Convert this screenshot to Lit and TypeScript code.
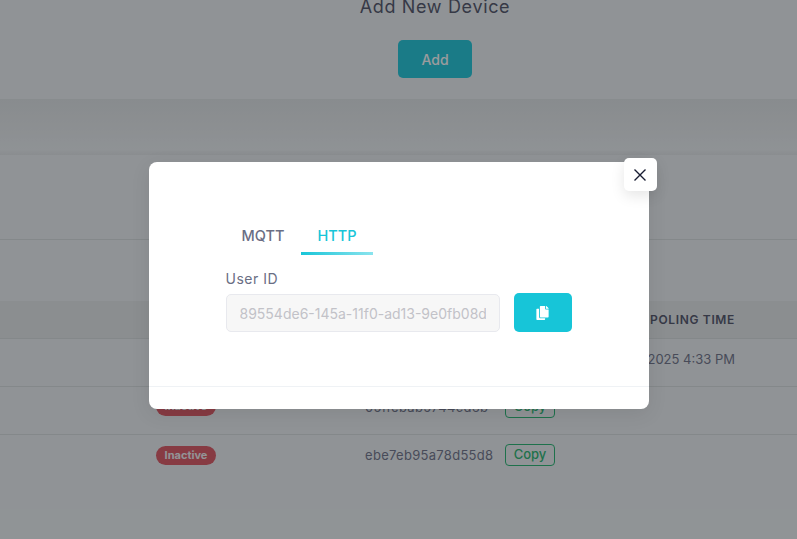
import { LitElement, html, css } from "lit";
import { customElement, state } from "lit/decorators.js";

const rows = [
  { id: "a41c7e90d2b6f358", date: "Jun 2, 2025 4:33 PM" },
  { id: "05ffebab5744cd6b", date: "" },
  { id: "ebe7eb95a78d55d8", date: "" },
];

@customElement("app-root")
export class AppRoot extends LitElement {
  static styles = css`
    :host {
      display: block;
      font-family: "Inter", "Liberation Sans", sans-serif;
    }
    .page {
      position: relative;
      height: 539px;
      overflow: hidden;
      background: #edf1f2;
      color: #3f4254;
    }
    .addSection {
      height: 99px;
      box-sizing: border-box;
      padding-left: 73px;
      display: flex;
      flex-direction: column;
      align-items: center;
    }
    .addSection h2 {
      margin: 0;
      height: 40px;
      font-size: 18px;
      line-height: 14px;
      font-weight: 400;
      letter-spacing: 0.65px;
      color: #4a4d62;
    }
    .addBtn {
      width: 74px;
      height: 38px;
      border: none;
      border-radius: 5px;
      background: #17c5d8;
      color: #fff;
      font: inherit;
      font-size: 14px;
      font-weight: 500;
    }
    .band {
      height: 56px;
      background: linear-gradient(#dfe3e4, #ebeff0 90%, #e2e6e7);
    }
    .filters {
      height: 84px;
      border-bottom: 1px solid #d8dcdd;
    }
    .spacer {
      height: 61px;
    }
    .row {
      display: grid;
      grid-template-columns: 156px 209px 140px 50px 180px;
      align-items: center;
      height: 48px;
      padding-bottom: 8px;
      box-sizing: border-box;
      border-bottom: 1px solid #d8dcdd;
      font-size: 13px;
      color: #6a6e84;
    }
    .row:last-child {
      border-bottom: none;
    }
    .head {
      height: 38px;
      padding-bottom: 0;
      background: #e3e7e8;
      font-size: 12px;
      font-weight: 600;
      letter-spacing: 0.65px;
      color: #4a4d62;
    }
    .cell-date {
      text-align: right;
    }
    .badge {
      display: inline-block;
      width: 60px;
      height: 19px;
      line-height: 18px;
      text-align: center;
      border-radius: 10px;
      background: #dc505c;
      color: #f2f2f2;
      font-size: 11px;
      font-weight: 700;
    }
    .id {
      letter-spacing: 0.3px;
    }
    .copy {
      width: 50px;
      height: 22px;
      padding: 0 0 2px;
      border: 1px solid #1eb36b;
      border-radius: 4px;
      background: transparent;
      color: #1eb36b;
      font: inherit;
      font-size: 13px;
      font-weight: 500;
    }
    .overlay {
      position: absolute;
      inset: 0;
      display: flex;
      justify-content: center;
      align-items: flex-start;
      padding-top: 162px;
      background: rgba(30, 34, 38, 0.45);
    }
    .modal {
      position: relative;
      width: 500px;
      height: 247px;
      box-sizing: border-box;
      display: flex;
      flex-direction: column;
      background: #fff;
      border-radius: 8px;
      box-shadow: 0 5px 20px rgba(0, 0, 0, 0.08);
    }
    .close {
      position: absolute;
      top: -4px;
      right: -8px;
      width: 33px;
      height: 33px;
      display: flex;
      align-items: center;
      justify-content: center;
      padding: 0;
      border: none;
      border-radius: 5px;
      background: #fff;
      box-shadow: 0 5px 14px rgba(0, 0, 0, 0.1);
    }
    .body {
      flex: 1;
      padding: 58px 77px 0;
      border-bottom: 1px solid #eff2f5;
    }
    .tabs {
      display: flex;
      height: 35px;
    }
    .tab {
      box-sizing: border-box;
      height: 35px;
      padding: 6px 16px 0 17px;
      font-size: 14.5px;
      font-weight: 500;
      line-height: 20px;
      color: #6a6e84;
    }
    .tab.mqtt {
      width: 75px;
      padding-left: 16px;
    }
    .tab.http {
      width: 72px;
      color: #17c5d8;
      border-bottom: 3px solid;
      border-image: linear-gradient(90deg, #17c5d8, #8ce4ee) 1;
    }
    label {
      display: block;
      margin: 15px 0 5px;
      font-size: 14px;
      line-height: 18px;
      letter-spacing: 0.5px;
      color: #6a6e84;
    }
    .field {
      display: flex;
      align-items: flex-start;
      gap: 14px;
    }
    input {
      width: 274px;
      height: 38px;
      margin-top: 1px;
      box-sizing: border-box;
      padding: 0 13px;
      border: 1px solid #e8e9ee;
      border-radius: 5px;
      background: #f7f7f7;
      color: #c2c2c8;
      font: inherit;
      font-size: 14px;
      letter-spacing: 0;
    }
    .copyIcon {
      width: 58px;
      height: 39px;
      display: flex;
      align-items: center;
      justify-content: center;
      padding: 0;
      border: none;
      border-radius: 5px;
      background: #17c5d8;
    }
    .footer {
      height: 22px;
    }
  `;

  @state() tab = "http";

  render() {
    return html`
      <div class="page">
        <div class="addSection">
          <h2>Add New Device</h2>
          <button class="addBtn">Add</button>
        </div>
        <div class="band"></div>
        <div class="filters"></div>
        <div class="spacer"></div>
        <div class="table">
          <div class="row head">
            <span></span><span>STATUS</span><span>DEVICE ID</span><span></span>
            <span class="cell-date">POLING TIME</span>
          </div>
          ${rows.map(
            (r) => html`
              <div class="row">
                <span></span>
                <span><span class="badge">Inactive</span></span>
                <span class="id">${r.id}</span>
                <button class="copy">Copy</button>
                <span class="cell-date">${r.date}</span>
              </div>
            `
          )}
        </div>
        <div class="overlay">
          <div class="modal">
            <button class="close" aria-label="Close">
              <svg width="12" height="12" viewBox="0 0 12 12" fill="none" stroke="#181c32" stroke-width="1.4">
                <path d="M0.5 0.5 L11.5 11.5 M11.5 0.5 L0.5 11.5"></path>
              </svg>
            </button>
            <div class="body">
              <div class="tabs">
                <div class="tab mqtt">MQTT</div>
                <div class="tab http">HTTP</div>
              </div>
              <label>User ID</label>
              <div class="field">
                <input disabled value="89554de6-145a-11f0-ad13-9e0fb08d" />
                <button class="copyIcon" aria-label="Copy">
                  <svg width="13" height="14" viewBox="0 0 448 512" fill="#fff">
                    <path d="M320 448v40c0 13.255-10.745 24-24 24H24c-13.255 0-24-10.745-24-24V120c0-13.255 10.745-24 24-24h72v296c0 30.879 25.121 56 56 56h168zm0-344V0H152c-13.255 0-24 10.745-24 24v368c0 13.255 10.745 24 24 24h272c13.255 0 24-10.745 24-24V128H344c-13.2 0-24-10.8-24-24zm120.971-31.029L375.029 7.029A24 24 0 0 0 358.059 0H352v96h96v-6.059a24 24 0 0 0-7.029-16.97z"></path>
                  </svg>
                </button>
              </div>
            </div>
            <div class="footer"></div>
          </div>
        </div>
      </div>
    `;
  }
}
